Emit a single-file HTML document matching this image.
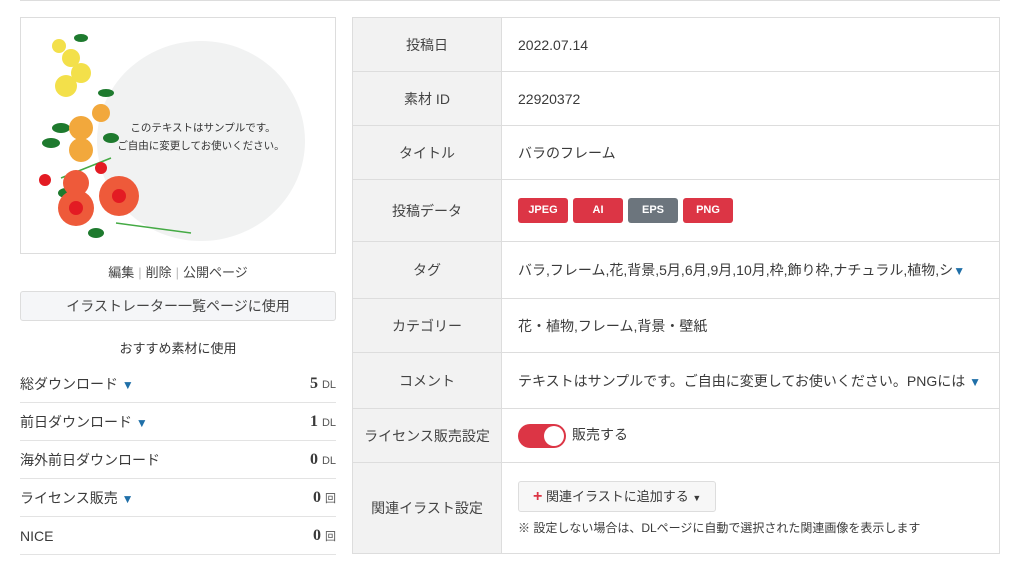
<!DOCTYPE html>
<html><head><meta charset="utf-8"><style>
*{box-sizing:border-box;margin:0;padding:0}
body{width:1024px;height:566px;overflow:hidden;background:#fff;font-family:"Liberation Sans","Noto Sans CJK JP",sans-serif;color:#3a3a3a;font-size:14px;position:relative}
.topline{position:absolute;left:20px;top:0;width:980px;height:1px;background:#ddd}
.img{position:absolute;left:20px;top:17px;width:316px;height:237px;border:1px solid #ddd;background:#fff;overflow:hidden}
.links{position:absolute;left:20px;top:262px;width:316px;text-align:center;font-size:13px;color:#444}
.links span{color:#bbb;margin:0 4px}
.btn{position:absolute;left:20px;top:291px;width:316px;height:30px;border:1px solid #ddd;border-radius:3px;background:#f5f6f8;text-align:center;line-height:28px;font-size:14px;color:#444}
.rec{position:absolute;left:20px;top:338px;width:316px;text-align:center;font-size:13px;color:#333}
.stats{position:absolute;left:20px;top:365px;width:316px}
.stats div{height:38px;border-bottom:1px solid #e3e3e3;display:flex;justify-content:space-between;align-items:center;font-size:14px;color:#3a3a3a}
.stats b{font-family:"Liberation Serif",serif;font-size:16px}
.stats small{font-size:11px;color:#555;margin-left:4px}
.tri{color:#1f6fa8;font-size:12px}
table{position:absolute;left:352px;top:17px;width:648px;border-collapse:collapse;border:1px solid #ddd}
td{border-top:1px solid #ddd;font-size:14px;color:#3a3a3a}
td.l{width:149px;background:#f2f2f2;text-align:center;border-right:1px solid #ddd;color:#444}
td.r{padding-left:16px}
.b{display:inline-block;width:50px;height:25px;border-radius:3px;color:#fff;font-size:11px;font-weight:bold;text-align:center;line-height:25px;margin-right:5px;background:#dc3545}
.g{background:#6c757d}
.tog{display:inline-block;width:48px;height:24px;border-radius:12px;background:#dc3545;vertical-align:middle;position:relative;margin-right:6px}
.tog:after{content:"";position:absolute;right:2px;top:2px;width:20px;height:20px;border-radius:50%;background:#fff}
.add{display:inline-block;height:31px;border:1px solid #ddd;border-radius:3px;background:#f7f7f7;padding:0 14px;line-height:29px;font-size:13px}
</style></head><body>
<div class="topline"></div>
<div class="img">
<svg width="316" height="237">
<ellipse cx="180" cy="123" rx="104" ry="100" fill="#f1f2f2"/>
<g fill="#1e7a2e"><ellipse cx="40" cy="110" rx="9" ry="5"/><ellipse cx="30" cy="125" rx="9" ry="5"/><ellipse cx="85" cy="75" rx="8" ry="4"/><ellipse cx="90" cy="120" rx="8" ry="5"/><ellipse cx="75" cy="215" rx="8" ry="5"/><ellipse cx="45" cy="175" rx="8" ry="5"/><ellipse cx="60" cy="20" rx="7" ry="4"/></g>
<path d="M40 160 L90 140 M95 205 L170 215" stroke="#4a4" stroke-width="1.5"/>
<g fill="#f3e04a"><circle cx="38" cy="28" r="7"/><circle cx="50" cy="40" r="9"/><circle cx="60" cy="55" r="10"/><circle cx="45" cy="68" r="11"/></g>
<g fill="#f2a83c"><circle cx="60" cy="110" r="12"/><circle cx="80" cy="95" r="9"/><circle cx="60" cy="132" r="12"/></g>
<g fill="#ee5a3a"><circle cx="55" cy="165" r="13"/><circle cx="98" cy="178" r="20"/><circle cx="55" cy="190" r="18"/></g>
<g fill="#e31b23"><circle cx="24" cy="162" r="6"/><circle cx="80" cy="150" r="6"/><circle cx="98" cy="178" r="7"/><circle cx="55" cy="190" r="7"/></g>
<text x="182" y="113" font-size="10.5" text-anchor="middle" fill="#333">このテキストはサンプルです。</text>
<text x="180" y="131" font-size="10.5" text-anchor="middle" fill="#333">ご自由に変更してお使いください。</text>
</svg></div>
<div class="links">編集<span>|</span>削除<span>|</span>公開ページ</div>
<div class="btn">イラストレーター一覧ページに使用</div>
<div class="rec">おすすめ素材に使用</div>
<div class="stats">
<div><span>総ダウンロード <span class="tri">▼</span></span><span><b>5</b><small>DL</small></span></div>
<div><span>前日ダウンロード <span class="tri">▼</span></span><span><b>1</b><small>DL</small></span></div>
<div><span>海外前日ダウンロード</span><span><b>0</b><small>DL</small></span></div>
<div><span>ライセンス販売 <span class="tri">▼</span></span><span><b>0</b><small>回</small></span></div>
<div><span>NICE</span><span><b>0</b><small>回</small></span></div>
</div>
<table>
<tr style="height:54px"><td class="l">投稿日</td><td class="r">2022.07.14</td></tr>
<tr style="height:54px"><td class="l">素材 ID</td><td class="r">22920372</td></tr>
<tr style="height:54px"><td class="l">タイトル</td><td class="r">バラのフレーム</td></tr>
<tr style="height:62px"><td class="l">投稿データ</td><td class="r"><span class="b">JPEG</span><span class="b">AI</span><span class="b g">EPS</span><span class="b">PNG</span></td></tr>
<tr style="height:57px"><td class="l">タグ</td><td class="r">バラ,フレーム,花,背景,5月,6月,9月,10月,枠,飾り枠,ナチュラル,植物,シ<span class="tri">▼</span></td></tr>
<tr style="height:54px"><td class="l">カテゴリー</td><td class="r">花・植物,フレーム,背景・壁紙</td></tr>
<tr style="height:56px"><td class="l">コメント</td><td class="r">テキストはサンプルです。ご自由に変更してお使いください。PNGには <span class="tri">▼</span></td></tr>
<tr style="height:54px"><td class="l">ライセンス販売設定</td><td class="r"><span class="tog"></span>販売する</td></tr>
<tr style="height:91px"><td class="l">関連イラスト設定</td><td class="r"><div class="add"><span style="color:#dc3545;font-weight:bold;font-size:16px">+</span> 関連イラストに追加する <span style="font-size:9px">▼</span></div><div style="font-size:12px;margin-top:7px">※ 設定しない場合は、DLページに自動で選択された関連画像を表示します</div></td></tr>
</table>
</body></html>
